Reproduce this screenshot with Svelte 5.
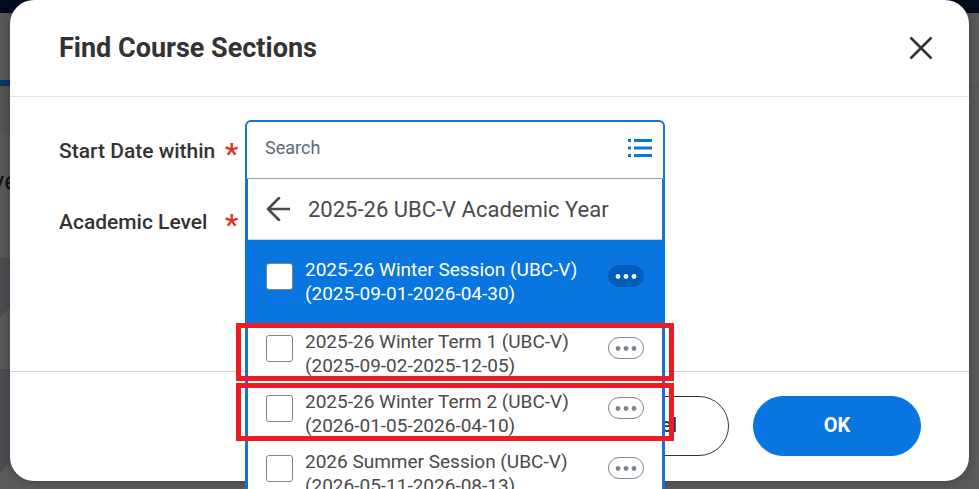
<script>
  let query = $state('');

  let options = $state([
    { id: 'ws', name: '2025-26 Winter Session (UBC-V)', dates: '(2025-09-01-2026-04-30)', active: true, marked: false, checked: false },
    { id: 'w1', name: '2025-26 Winter Term 1 (UBC-V)', dates: '(2025-09-02-2025-12-05)', active: false, marked: true, checked: false },
    { id: 'w2', name: '2025-26 Winter Term 2 (UBC-V)', dates: '(2026-01-05-2026-04-10)', active: false, marked: true, checked: false },
    { id: 'ss', name: '2026 Summer Session (UBC-V)', dates: '(2026-05-11-2026-08-13)', active: false, marked: false, checked: false }
  ]);
</script>

<div class="page">
  <!-- Dimmed page behind the dialog -->
  <div class="backdrop" aria-hidden="true">
    <div class="topbar"></div>
    <div class="nav"></div>
    <div class="nav-line"><span></span></div>
    <div class="strip"></div>
    <div class="heading"><span>ve</span></div>
    <div class="tile"></div>
    <div class="tile tall"></div>
  </div>

  <div class="dialog" role="dialog" aria-labelledby="dialog-title">
    <header class="header">
      <h1 id="dialog-title">Find Course Sections</h1>
      <button class="close" type="button" aria-label="Close">
        <svg viewBox="0 0 24 24" width="24" height="24">
          <path d="M1.5 1.5l21 21M22.5 1.5l-21 21" />
        </svg>
      </button>
    </header>

    <form class="form">
      <label for="start-date">Start Date within</label>
      <span class="required">*</span>
      <div class="field">
        <div class="search">
          <input id="start-date" type="text" placeholder="Search" autocomplete="off" bind:value={query} />
          <button class="icon-btn" type="button" aria-label="Show list">
            <svg class="list-icon" viewBox="0 0 24 20" width="24" height="20">
              <path d="M0 2.5h3M6 2.5h18M0 10h3M6 10h18M0 17.5h3M6 17.5h18" />
            </svg>
          </button>
        </div>

        <div class="menu">
          <div class="menu-head">
            <button class="icon-btn" type="button" aria-label="Back">
              <svg class="arrow" viewBox="0 0 24 24" width="24" height="24">
                <path d="M23.5 12H2M13 1L2 12l11 11" />
              </svg>
            </button>
            <span>2025-26 UBC-V Academic Year</span>
          </div>
          <ul>
            {#each options as option (option.id)}
              <li class:active={option.active} class:marked={option.marked}>
                <input type="checkbox" id={option.id} bind:checked={option.checked} />
                <label for={option.id}>{option.name}<br />{option.dates}</label>
                <button class="more" type="button" aria-label="Related actions">
                  <svg viewBox="0 0 22 5" width="22" height="5">
                    <circle cx="3" cy="2.5" r="2.4" />
                    <circle cx="11" cy="2.5" r="2.4" />
                    <circle cx="19" cy="2.5" r="2.4" />
                  </svg>
                </button>
              </li>
            {/each}
          </ul>
        </div>
      </div>

      <label for="level">Academic Level</label>
      <span class="required">*</span>
      <div class="field">
        <input id="level" class="level" type="text" />
      </div>
    </form>

    <footer class="footer">
      <button class="btn" type="button">Cancel</button>
      <button class="btn primary" type="button">OK</button>
    </footer>
  </div>
</div>

<style>
  :global(body) {
    margin: 0;
    overflow: hidden;
    background: #595959;
  }

  .page {
    position: relative;
    box-sizing: border-box;
    height: 100vh;
    padding: 0 10px 8px;
    display: flex;
    flex-direction: column;
    font-family: Roboto, "Liberation Sans", sans-serif;
    color: #333;
  }

  button,
  input {
    font-family: inherit;
  }

  /* Backdrop */
  .backdrop {
    position: absolute;
    inset: 0;
    overflow: hidden;
    display: flex;
    flex-direction: column;
  }

  .topbar {
    height: 13px;
    background: #000c1f;
  }

  .nav {
    height: 67px;
  }

  .nav-line {
    height: 6px;
    border-bottom: 1px solid #505050;
  }

  .nav-line span {
    display: block;
    width: 50%;
    height: 6px;
    background: #00386f;
  }

  .strip {
    height: 48px;
    background: linear-gradient(90deg, #545454 50%, #595959 50%);
  }

  .heading {
    height: 123px;
    line-height: 92px;
    font-size: 26px;
    color: #111;
    background: #595959;
  }

  .heading span {
    display: flex;
    justify-content: flex-end;
    width: 18px;
  }

  .tile {
    height: 111px;
    background: linear-gradient(135deg, #4b4d50 42px, #595959 42px);
    background-size: 50% 100%;
    background-repeat: no-repeat;
  }

  .tile.tall {
    background-image: linear-gradient(135deg, #4b4d50 73px, #595959 73px);
  }

  /* Dialog */
  .dialog {
    position: relative;
    flex: 1;
    display: flex;
    flex-direction: column;
    background: #fff;
    border-radius: 24px;
    box-shadow: 0 0 8px rgba(0, 0, 0, 0.3);
  }

  .header {
    display: flex;
    align-items: center;
    justify-content: space-between;
    height: 96px;
    padding: 0 24px 0 49px;
    border-bottom: 1px solid #dfe2e6;
  }

  h1 {
    margin: 0;
    font-size: 27px;
    font-weight: 700;
  }

  .close {
    display: flex;
    align-items: center;
    justify-content: center;
    width: 48px;
    height: 48px;
    padding: 0;
    border: 0;
    background: none;
  }

  .close svg {
    fill: none;
    stroke: #333;
    stroke-width: 2.6;
  }

  .form {
    flex: 1;
    display: grid;
    grid-template-columns: 158px 12px 420px;
    grid-auto-rows: 60px;
    row-gap: 11px;
    column-gap: 8px;
    align-items: center;
    padding: 23px 49px 0;
  }

  .form > label {
    padding-top: 2px;
    font-size: 21px;
    font-weight: 500;
    white-space: nowrap;
  }

  .required {
    font-size: 30px;
    line-height: 30px;
    padding-top: 8px;
    font-weight: 500;
    color: #de2e21;
  }

  .field {
    position: relative;
    align-self: start;
  }

  .level {
    box-sizing: border-box;
    width: 100%;
    height: 60px;
    border: 1px solid #7b858f;
    border-radius: 6px;
  }

  .search {
    box-sizing: border-box;
    display: flex;
    align-items: center;
    height: 59px;
    padding: 0 11px 4px 18px;
    border: 2px solid #1872d0;
    border-bottom: 1px solid #8f9baa;
    border-radius: 6px 6px 0 0;
    background: #fff;
  }

  .search input {
    flex: 1;
    min-width: 0;
    padding: 0 0 2px;
    border: 0;
    outline: 0;
    font-size: 18px;
    color: #333;
  }

  .search input::placeholder {
    color: #5e6a75;
  }

  .icon-btn {
    display: flex;
    padding: 0;
    border: 0;
    background: none;
  }

  .list-icon {
    fill: none;
    stroke: #0875e1;
    stroke-width: 3;
  }

  .arrow {
    fill: none;
    stroke: #4a4a4a;
    stroke-width: 2.6;
    stroke-linecap: round;
    stroke-linejoin: round;
  }

  /* Drop-down menu */
  .menu {
    position: absolute;
    z-index: 2;
    top: 100%;
    left: 0;
    right: 0;
    border: 3px solid #1872d0;
    border-top: 0;
    background: #fff;
  }

  .menu-head {
    display: flex;
    align-items: center;
    gap: 18px;
    height: 60px;
    padding: 0 18px;
    border-bottom: 1px solid #ced3d9;
    font-size: 22px;
    color: #4a4a4a;
    white-space: nowrap;
  }

  ul {
    margin: 0;
    padding: 0;
    list-style: none;
  }

  li {
    position: relative;
    display: flex;
    align-items: flex-start;
    gap: 12px;
    padding: 6px 18px;
    font-size: 19px;
    line-height: 24px;
    color: #4a4a4a;
  }

  li label {
    flex: 1;
    white-space: nowrap;
  }

  li input {
    appearance: none;
    box-sizing: border-box;
    flex: none;
    width: 27px;
    height: 27px;
    margin: 5px 0 0;
    border: 1px solid #7b858f;
    border-radius: 3px;
    background: #fff;
  }

  li.active {
    margin: 0 -3px;
    padding: 18px 21px;
    background: #0875e1;
    color: #fff;
  }

  .more {
    display: flex;
    align-items: center;
    justify-content: center;
    box-sizing: border-box;
    width: 36px;
    height: 22px;
    margin: 7px 0 0;
    padding: 0;
    border: 1px solid #7b858f;
    border-radius: 11px;
    background: #fff;
  }

  .more svg {
    fill: #7b858f;
  }

  .active .more {
    border-color: #005cb9;
    background: #005cb9;
  }

  .active .more svg {
    fill: #fff;
  }

  /* Red frame around the two terms to pick */
  .marked::after {
    content: "";
    position: absolute;
    inset: -1px -12px 3px;
    border: 5px solid #ec1c24;
    pointer-events: none;
  }

  /* Footer */
  .footer {
    display: flex;
    justify-content: flex-end;
    gap: 24px;
    padding: 24px 48px 25px;
    border-top: 1px solid #ced3d9;
  }

  .btn {
    width: 168px;
    height: 60px;
    padding: 0 0 2px;
    border: 1px solid #333;
    border-radius: 30px;
    background: #fff;
    font-size: 21px;
    font-weight: 500;
    color: #333;
  }

  .primary {
    border-color: #0875e1;
    background: #0875e1;
    color: #fff;
    font-size: 20px;
    font-weight: 700;
  }
</style>
